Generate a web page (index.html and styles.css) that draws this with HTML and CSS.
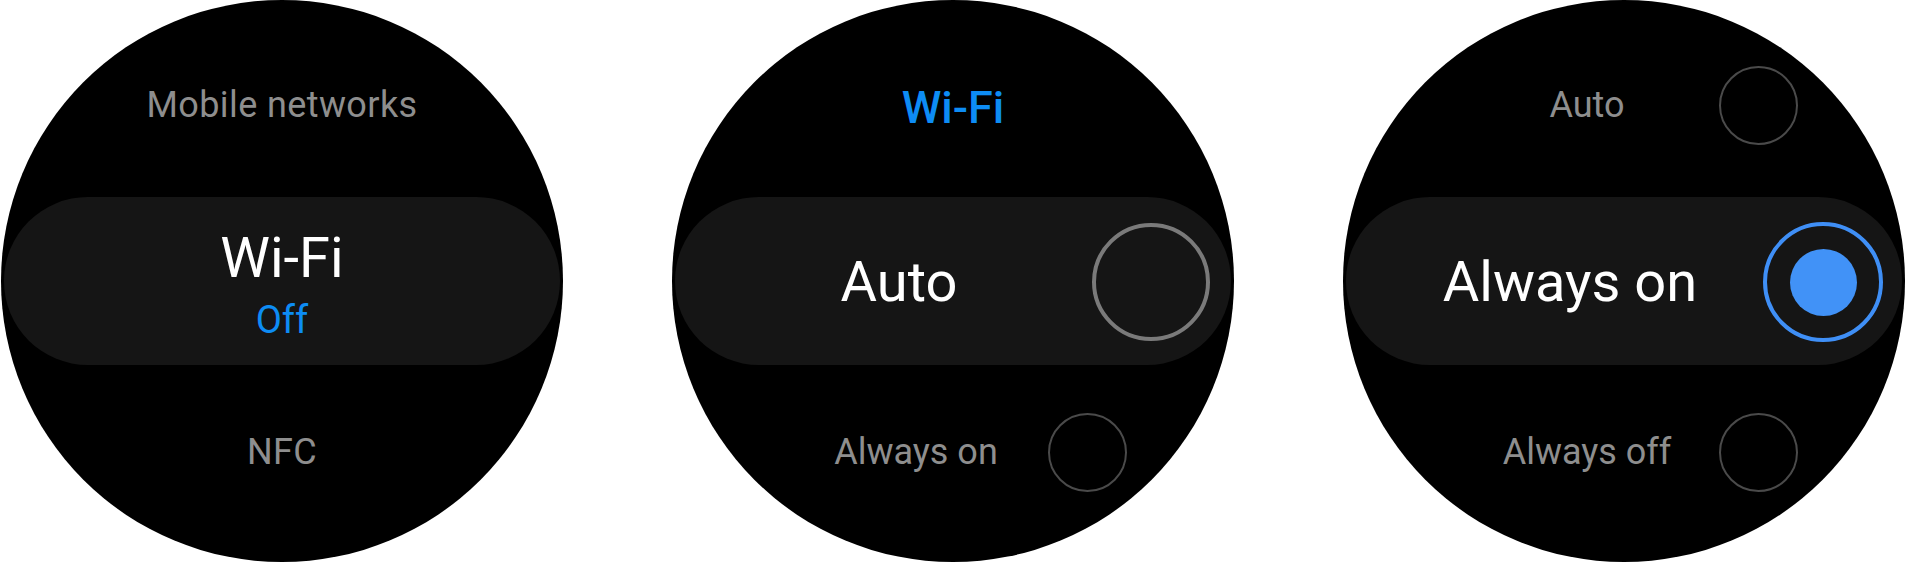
FILE: index.html
```html
<!DOCTYPE html>
<html lang="en">
<head>
<meta charset="utf-8">
<title>Wi-Fi settings</title>
<link rel="stylesheet" href="styles.css">
</head>
<body>
<div class="screens">
  <section class="watch">
    <div class="row row-plain"><span class="label">Mobile networks</span></div>
    <div class="pill pill-stack">
      <span class="big">Wi-Fi</span>
      <span class="sub">Off</span>
    </div>
    <div class="row row-plain"><span class="label">NFC</span></div>
  </section>

  <section class="watch">
    <div class="row row-plain"><span class="title">Wi-Fi</span></div>
    <div class="pill pill-option">
      <span class="opt-text big">Auto</span>
      <span class="radio radio-big"></span>
    </div>
    <div class="row row-option">
      <span class="opt-text label">Always on</span>
      <span class="radio radio-small"></span>
    </div>
  </section>

  <section class="watch">
    <div class="row row-option">
      <span class="opt-text label">Auto</span>
      <span class="radio radio-small"></span>
    </div>
    <div class="pill pill-option">
      <span class="opt-text big">Always on</span>
      <span class="radio radio-big radio-on"><span class="dot"></span></span>
    </div>
    <div class="row row-option">
      <span class="opt-text label">Always off</span>
      <span class="radio radio-small"></span>
    </div>
  </section>
</div>
</body>
</html>
```

FILE: styles.css
```css
* { box-sizing: border-box; }

html, body {
  margin: 0;
  padding: 0;
  background: #ffffff;
}

body {
  font-family: Roboto, "Noto Sans", "Liberation Sans", sans-serif;
}

.screens {
  display: flex;
  gap: 109px;
  padding-left: 1px;
  padding-top: 0;
}

.watch {
  width: 562px;
  height: 562px;
  flex: none;
  border-radius: 50%;
  background: #000000;
  overflow: hidden;
  display: flex;
  flex-direction: column;
  padding-top: 65px;
}

.row {
  height: 80px;
  display: flex;
  align-items: center;
}

.row-plain {
  justify-content: center;
}

.label {
  font-size: 36px;
  line-height: 80px;
  color: #8e8e8e;
  white-space: nowrap;
}

.row-plain .label {
  letter-spacing: 0.4px;
}

.title {
  font-size: 45px;
  font-weight: 500;
  line-height: 80px;
  color: #0d8cf4;
  padding-top: 6px;
}

.pill {
  height: 168px;
  margin: 52px 3px 47px;
  border-radius: 84px;
  background: #151515;
}

.pill-stack {
  display: flex;
  flex-direction: column;
  align-items: center;
  justify-content: center;
  padding-top: 6px;
}

.big {
  font-size: 56px;
  line-height: 64px;
  color: #ffffff;
  white-space: nowrap;
}

.sub {
  font-size: 38px;
  line-height: 44px;
  margin-top: 8px;
  color: #0d8cf4;
}

.pill-option {
  display: flex;
  align-items: center;
  padding: 2px 21px 0 41px;
  gap: 10px;
}

.opt-text {
  flex: 1;
  text-align: center;
}

.row-option {
  padding: 0 107px 0 124px;
  gap: 12px;
}

.radio {
  flex: none;
  border-radius: 50%;
  display: flex;
  align-items: center;
  justify-content: center;
}

.radio-big {
  width: 118px;
  height: 118px;
  border: 4px solid #7a7a7a;
}

.radio-small {
  width: 79px;
  height: 79px;
  border: 2.5px solid #4a4a4a;
}

.radio-on {
  width: 120px;
  height: 120px;
  margin-right: -2px;
  border: 4px solid #3f8ff6;
}

.dot {
  width: 67px;
  height: 67px;
  border-radius: 50%;
  background: #4192f7;
}
```
